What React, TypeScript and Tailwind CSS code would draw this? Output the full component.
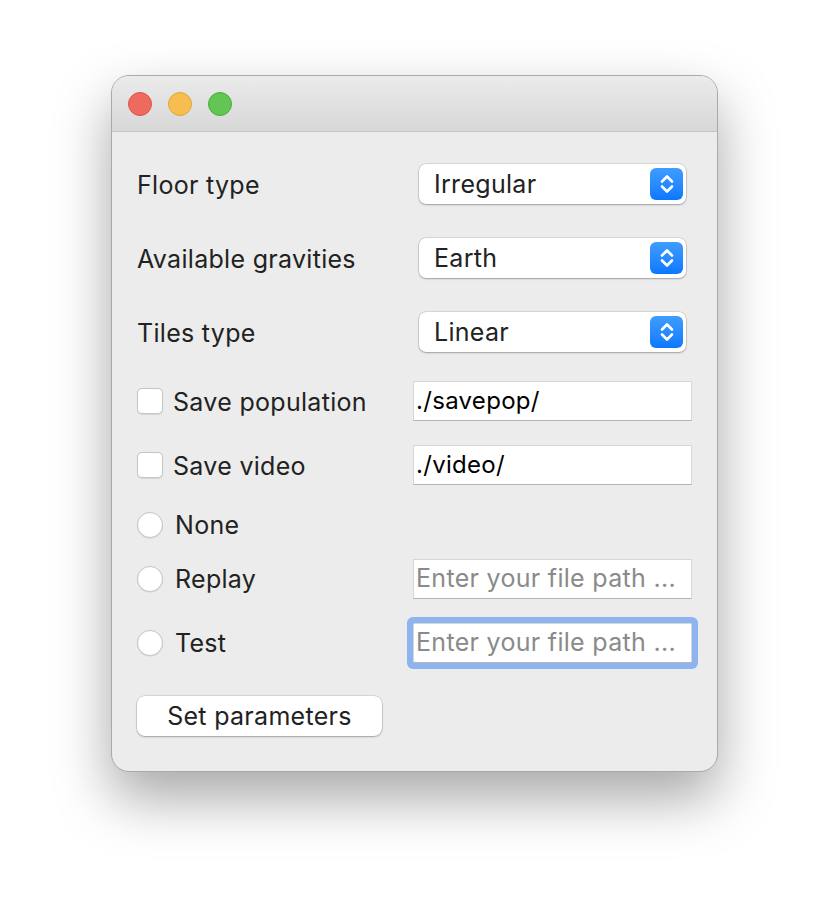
import React from 'react';

const font = { fontFamily: 'Inter, "Noto Sans", sans-serif' };

function SelectBox({ value }: { value: string }) {
    return (
        <div className="ml-auto mr-[31px] flex h-[40px] w-[267px] items-center rounded-[7px] bg-white pl-[15px] pr-[3px] shadow-[0_0_0_0.5px_rgba(0,0,0,0.18),0_1px_2px_rgba(0,0,0,0.25)]">
            <span className="mt-[2px] flex-1 text-[25px] tracking-[0.3px] text-[#222]">{value}</span>
            <div className="flex h-[32px] w-[33px] items-center justify-center rounded-[6px] bg-gradient-to-b from-[#3f9dff] to-[#0a78ff]">
                <svg width="18" height="24" viewBox="0 0 18 24" fill="none" stroke="white" strokeWidth="2.6" strokeLinecap="round" strokeLinejoin="round">
                    <path d="M4 9.5 L9 4.5 L14 9.5" />
                    <path d="M4 14.5 L9 19.5 L14 14.5" />
                </svg>
            </div>
        </div>
    );
}

function TextField({ value, placeholder, focused }: { value?: string; placeholder?: string; focused?: boolean }) {
    return (
        <div className={`ml-auto mr-[25px] flex h-[40px] w-[279px] items-center border border-[#d6d6d6] border-b-[#b4b4b4] bg-white pl-[2px] ${focused ? 'rounded-[2px] ring-[6px] ring-[#8db4ef]' : ''}`}>
            {value ? (
                <span className="text-[24px] text-black">{value}</span>
            ) : (
                <span className="text-[25px] tracking-[0.3px] text-[#8a8a8a]">{placeholder}</span>
            )}
        </div>
    );
}

function Checkbox() {
    return <div className="h-[26px] w-[26px] shrink-0 rounded-[5px] border border-[#c6c6c6] bg-white shadow-[0_0.5px_1px_rgba(0,0,0,0.1)]" />;
}

function Radio() {
    return <div className="h-[26px] w-[26px] shrink-0 rounded-full border border-[#c6c6c6] bg-white shadow-[0_0.5px_1px_rgba(0,0,0,0.1)]" />;
}

export default function App() {
    return (
        <div className="min-h-[920px] w-[830px] bg-white pl-[111px] pt-[75px]" style={font}>
            <div className="flex h-[697px] w-[607px] flex-col overflow-hidden rounded-[18px] border border-[#a9a9a9] bg-[#ececec] shadow-[0_26px_56px_rgba(0,0,0,0.35)]">
                {/* title bar */}
                <div className="flex h-[56px] shrink-0 items-center gap-[16px] border-b border-[#c4c4c4] bg-gradient-to-b from-[#ebebeb] to-[#d7d7d7] pl-[16px]">
                    <div className="h-[24px] w-[24px] rounded-full border border-[#dd5248] bg-[#ee6a5f]" />
                    <div className="h-[24px] w-[24px] rounded-full border border-[#dfa53b] bg-[#f5be4f]" />
                    <div className="h-[24px] w-[24px] rounded-full border border-[#4da83d] bg-[#62c554]" />
                </div>

                <div className="flex flex-col pl-[25px] text-[25px] tracking-[0.3px] text-[#222]">
                    <div className="mt-[32px] flex h-[40px] items-center">
                        <span className="mt-[3px]">Floor type</span>
                        <SelectBox value="Irregular" />
                    </div>
                    <div className="mt-[34px] flex h-[40px] items-center">
                        <span className="mt-[4px]">Available gravities</span>
                        <SelectBox value="Earth" />
                    </div>
                    <div className="mt-[34px] flex h-[40px] items-center">
                        <span className="mt-[3px]">Tiles type</span>
                        <SelectBox value="Linear" />
                    </div>
                    <div className="mt-[29px] flex h-[40px] items-center">
                        <Checkbox />
                        <span className="ml-[10px] mt-[4px]">Save population</span>
                        <TextField value="./savepop/" />
                    </div>
                    <div className="mt-[24px] flex h-[40px] items-center">
                        <Checkbox />
                        <span className="ml-[10px] mt-[3px]">Save video</span>
                        <TextField value="./video/" />
                    </div>
                    <div className="mt-[27px] flex h-[26px] items-center">
                        <Radio />
                        <span className="ml-[12px] mt-[1px]">None</span>
                    </div>
                    <div className="mt-[21px] flex h-[40px] items-center">
                        <Radio />
                        <span className="ml-[12px] mt-[2px]">Replay</span>
                        <TextField placeholder="Enter your file path ..." />
                    </div>
                    <div className="mt-[24px] flex h-[40px] items-center">
                        <Radio />
                        <span className="ml-[12px] mt-[2px]">Test</span>
                        <TextField placeholder="Enter your file path ..." focused />
                    </div>
                    <div className="mt-[33px] flex">
                        <button className="h-[40px] w-[245px] rounded-[8px] bg-white pt-[2px] text-[25px] tracking-[0.3px] text-[#222] shadow-[0_0_0_0.5px_rgba(0,0,0,0.18),0_1px_2px_rgba(0,0,0,0.25)]">
                            Set parameters
                        </button>
                    </div>
                </div>
            </div>
        </div>
    );
}
